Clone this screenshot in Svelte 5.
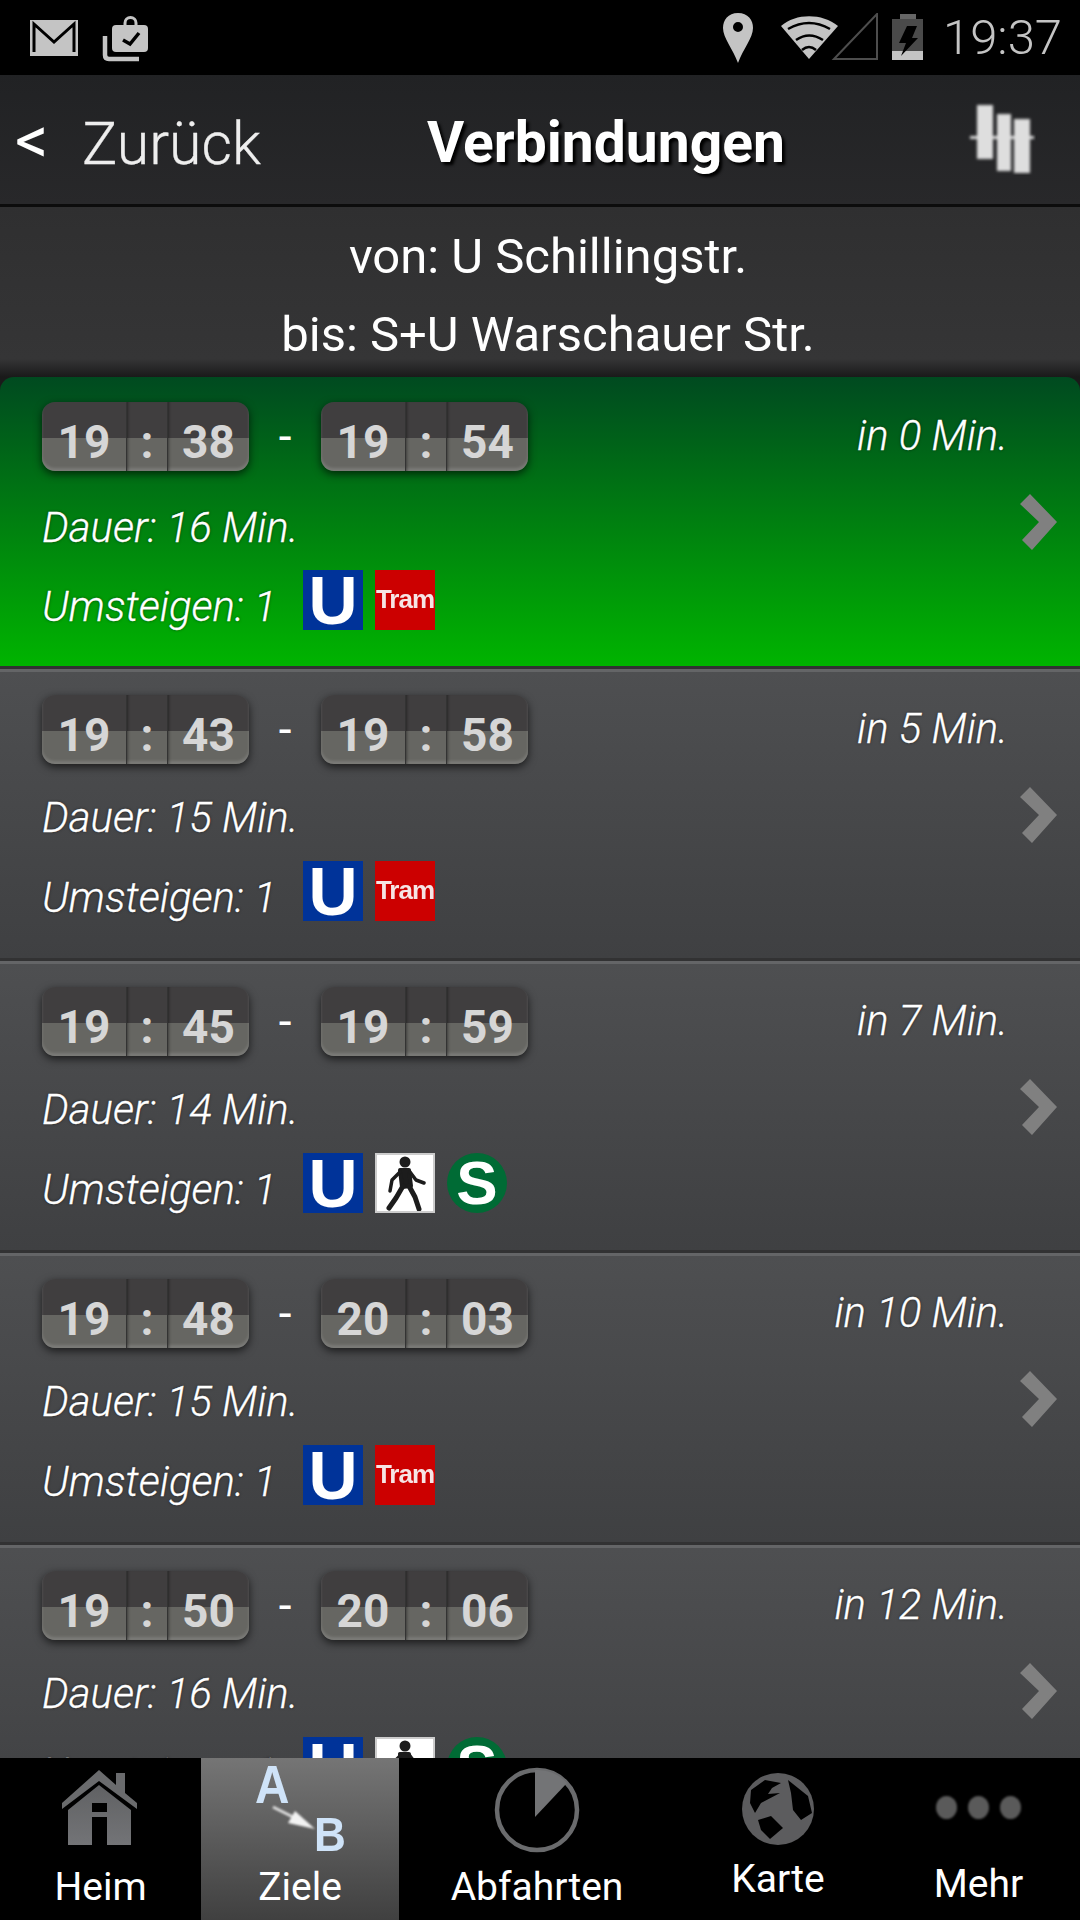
<script>
	let rows = [
		{ from: ['19', '38'], to: ['19', '54'], wait: 0, duration: 16, lines: ['u', 'tram'], active: true },
		{ from: ['19', '43'], to: ['19', '58'], wait: 5, duration: 15, lines: ['u', 'tram'] },
		{ from: ['19', '45'], to: ['19', '59'], wait: 7, duration: 14, lines: ['u', 'walk', 's'] },
		{ from: ['19', '48'], to: ['20', '03'], wait: 10, duration: 15, lines: ['u', 'tram'] },
		{ from: ['19', '50'], to: ['20', '06'], wait: 12, duration: 16, lines: ['u', 'walk', 's'] }
	];
</script>

{#snippet clock(time)}
	<div class="clock">
		<span class="cell hour">{time[0]}</span>
		<span class="cell colon">:</span>
		<span class="cell minute">{time[1]}</span>
	</div>
{/snippet}

<div class="screen">
	<div class="status">
		<svg width="125" height="50" viewBox="0 0 125 50">
			<rect x="0" y="7" width="48" height="36" fill="#c4c4c4" />
			<path d="M4 39 V11 L24 29 L44 11 V39" fill="none" stroke="#000" stroke-width="3" />
			<rect x="82" y="12" width="36" height="27" rx="4" fill="#c4c4c4" />
			<path d="M95 13 v-3 a5 5 0 0 1 11 0 v3" fill="none" stroke="#c4c4c4" stroke-width="3" />
			<path d="M93 27 l7 4 l9 -11" fill="none" stroke="#000" stroke-width="3.5" />
			<path d="M75 23 v19 q0 4 4 4 h30" fill="none" stroke="#c4c4c4" stroke-width="4.5" />
		</svg>
		<div class="st-right">
			<svg width="206" height="50" viewBox="0 0 206 50">
				<path fill-rule="evenodd" d="M18 0 C8 0 3 7 3 15 C3 25 13 36 18 50 C23 36 33 25 33 15 C33 7 28 0 18 0 Z M18 9 a5 5 0 1 1 0 10 a5 5 0 1 1 0 -10 Z" fill="#c4c4c4" />
				<path d="M61 13 C76 0 102 0 118 13 L89 46 Z" fill="#c4c4c4" />
				<path d="M68 16 Q89 4 110 16 M76 27 Q89 18 103 27 M82 37 Q89 31 96 37" fill="none" stroke="#000" stroke-width="2.5" />
				<path d="M114 46 L157 1 V46 Z" fill="none" stroke="#4d4d4d" stroke-width="2" />
				<rect x="180" y="1" width="16" height="6" fill="#666" />
				<rect x="172" y="6" width="31" height="32" fill="#4a4a4a" />
				<rect x="172" y="38" width="31" height="9" fill="#c4c4c4" />
				<path d="M187 13 L197 13 L192 25 L198 25 L181 43 L186 30 L179 30 Z" fill="#000" />
			</svg>
			<span class="time">19:37</span>
		</div>
	</div>

	<header class="topbar">
		<span class="back-arrow">&lt;</span>
		<span class="back">Zurück</span>
		<span class="title">Verbindungen</span>
		<svg class="filter" width="70" height="76" viewBox="0 0 70 76">
			<defs>
				<filter id="soft"><feGaussianBlur stdDeviation="1.5" /></filter>
				<filter id="softer"><feGaussianBlur stdDeviation="0.7" /></filter>
			</defs>
			<g filter="url(#soft)" fill="#dedede">
				<rect x="11" y="6" width="16" height="54" />
				<rect x="31" y="15" width="14" height="57" />
				<rect x="48" y="20" width="16" height="54" />
				<rect x="4" y="37" width="64" height="3" />
			</g>
		</svg>
	</header>

	<div class="route">
		<div>von: U Schillingstr.</div>
		<div>bis: S+U Warschauer Str.</div>
	</div>

	<div class="list">
		{#each rows as row}
			<div class="row" class:active={row.active}>
				<div class="left">
					<div class="times">
						{@render clock(row.from)}
						<span class="dash">-</span>
						{@render clock(row.to)}
					</div>
					<div class="info">Dauer: {row.duration} Min.</div>
					<div class="changes">
						<span class="info label">Umsteigen: 1</span>
						{#each row.lines as line}
							{#if line == 'u'}
								<span class="line u">U</span>
							{:else if line == 'tram'}
								<span class="line tram">Tram</span>
							{:else if line == 'walk'}
								<span class="line walk">
									<svg width="44" height="56" viewBox="0 0 44 56">
										<g fill="#1c1c1c" stroke="#1c1c1c" stroke-linecap="round" stroke-linejoin="round">
											<circle cx="22" cy="7" r="5.5" stroke="none" />
											<path d="M17 15 L26 15 L28 31 L19 32 Z" stroke-width="4" />
											<path d="M17 17 L9 25 L7 36" fill="none" stroke-width="3.5" />
											<path d="M27 17 L33 25 L41 28" fill="none" stroke-width="3.5" />
											<path d="M20 31 L13 43 L6 53" fill="none" stroke-width="5" />
											<path d="M26 31 L32 42 L36 54" fill="none" stroke-width="5" />
										</g>
									</svg>
								</span>
							{:else}
								<span class="line s">S</span>
							{/if}
						{/each}
					</div>
				</div>
				<div class="right">
					<div class="info wait">in {row.wait} Min.</div>
					<svg class="chevron" width="38" height="56" viewBox="0 0 38 56">
						<path d="M0 10 L10 0 L37 28 L12 56 L2 46 L19 28 Z" fill="#808080" />
					</svg>
				</div>
			</div>
		{/each}
	</div>

	<nav class="tabs">
		<div class="tab" style="width: 201px">
			<svg class="house" width="78" height="78" viewBox="0 0 78 78">
				<defs><linearGradient id="house" x1="0" y1="0" x2="0" y2="1"><stop offset="0" stop-color="#606163" /><stop offset="1" stop-color="#737477" /></linearGradient></defs>
				<path d="M37 1 L54 16 V4 H63 V24 L75 34 V40 L37 12 L0 40 V34 Z" fill="#6a6b6d" />
				<path fill-rule="evenodd" d="M37 16 L69 41 V76 H45 V48 H30 V76 H6 V41 Z M30 34 H45 V43 H30 Z" fill="url(#house)" />
			</svg>
			<span>Heim</span>
		</div>
		<div class="tab selected" style="width: 198px">
			<div class="ab">
				<span class="a">A</span>
				<svg class="arrow" width="50" height="30" viewBox="0 0 50 30">
					<path d="M3 3 L25 14" stroke="#ddd" stroke-width="3" />
					<path d="M45 25 L25 7 L18 19 Z" fill="#f2f2f2" />
				</svg>
				<span class="b">B</span>
			</div>
			<span>Ziele</span>
		</div>
		<div class="tab" style="width: 276px">
			<svg width="86" height="86" viewBox="0 0 86 86">
				<circle cx="43" cy="43" r="40" fill="none" stroke="#6a6b6d" stroke-width="4.5" />
				<path d="M41 50 L41 3 A40 40 0 0 1 73 16 Z" fill="#737476" />
			</svg>
			<span>Abfahrten</span>
		</div>
		<div class="tab karte" style="width: 206px">
			<svg width="72" height="72" viewBox="0 0 72 72">
				<circle cx="36" cy="36" r="36" fill="#5c5c5e" />
				<g fill="#000" filter="url(#softer)">
					<path d="M8 30 L9 17 L23 7 L39 10 L30 15 L26 21 L38 20 L19 30 L13 40 Z" />
					<path d="M46 7 L66 23 L70 40 L59 47 L51 37 L49 20 Z" />
					<path d="M16 47 L29 43 L41 55 L28 66 L19 57 Z" />
				</g>
			</svg>
			<span>Karte</span>
		</div>
		<div class="tab mehr" style="width: 195px">
			<div class="dots"><i></i><i></i><i></i></div>
			<span>Mehr</span>
		</div>
	</nav>
</div>

<style>
	:global(body) {
		margin: 0;
		background: #000;
	}

	.screen {
		width: 1080px;
		height: 1920px;
		display: flex;
		flex-direction: column;
		font-family: Roboto, 'Liberation Sans', sans-serif;
		color: #fff;
		overflow: hidden;
	}

	.status {
		height: 75px;
		flex: none;
		background: #000;
		display: flex;
		justify-content: space-between;
		align-items: center;
		padding: 0 18px 0 30px;
		box-sizing: border-box;
	}

	.st-right {
		display: flex;
		align-items: center;
		gap: 17px;
	}

	.time {
		font-size: 49px;
		font-weight: 300;
		color: #c4c4c4;
		line-height: 50px;
	}

	.topbar {
		height: 132px;
		flex: none;
		box-sizing: border-box;
		display: flex;
		align-items: center;
		background: linear-gradient(#212224, #28282a);
		border-bottom: 3px solid #0c0c0c;
		padding-left: 15px;
	}

	.back-arrow {
		font-size: 66px;
		font-weight: 400;
		width: 67px;
		margin-top: 2px;
	}

	.back {
		font-size: 59px;
		font-weight: 300;
		width: 345px;
		color: #eee;
		margin-top: 7px;
		-webkit-text-stroke: 0.3px #eee;
	}

	.title {
		font-size: 57px;
		font-weight: 700;
		width: 539px;
		text-shadow: 3px 3px 3px #000;
		margin-top: 6px;
	}

	.filter {
		margin-top: -6px;
	}

	.route {
		height: 170px;
		flex: none;
		box-sizing: border-box;
		background: linear-gradient(#2f2f30, #353536 calc(100% - 18px), #1a1a1a);
		text-align: center;
		font-size: 49px;
		line-height: 78px;
		padding: 11px 0 0 16px;
	}

	.list {
		flex: 1;
		min-height: 0;
		overflow: hidden;
		background: #1a1a1a;
	}

	.row {
		height: 292px;
		box-sizing: border-box;
		display: flex;
		justify-content: space-between;
		padding: 23px 22px 0 42px;
		background: linear-gradient(#4e4f51, #3f4042);
		border-top: 3px solid #646567;
		border-bottom: 3px solid #323233;
	}

	.row.active {
		background: linear-gradient(#004a20, #00b400);
		border-top: 0;
		padding-top: 25px;
		border-radius: 14px 14px 0 0;
	}

	.times {
		display: flex;
		align-items: center;
	}

	.clock {
		width: 207px;
		height: 69px;
		display: flex;
		border-radius: 13px;
		background: linear-gradient(#403e3f 52%, #666662 52%);
		box-shadow:
			0 3px 8px rgba(0, 0, 0, 0.65),
			inset 0 -3px 3px rgba(255, 255, 255, 0.14);
		color: #d6d6d6;
		font-size: 46px;
		font-weight: 700;
		line-height: 81px;
		overflow: hidden;
	}

	.cell {
		text-align: center;
		box-sizing: border-box;
	}

	.hour {
		width: 84px;
	}

	.colon {
		width: 42px;
		border-left: 1px solid #333;
		border-right: 1px solid #333;
		box-shadow: inset 3px 0 3px -2px rgba(0, 0, 0, 0.4);
	}

	.minute {
		width: 81px;
		box-shadow: inset 3px 0 3px -2px rgba(0, 0, 0, 0.4);
	}

	.dash {
		width: 72px;
		text-align: center;
		font-size: 46px;
		margin-top: -2px;
	}

	.info {
		font-size: 42px;
		font-weight: 300;
		font-style: italic;
		line-height: 60px;
		text-shadow: 0 0 3px rgba(0, 0, 0, 0.6);
		-webkit-text-stroke: 0.3px #fff;
		white-space: nowrap;
	}

	.left > .info {
		margin-top: 24px;
	}

	.active .left > .info {
		margin-top: 27px;
	}

	.changes {
		display: flex;
		align-items: flex-start;
		height: 60px;
		margin-top: 13px;
	}

	.active .changes {
		margin-top: 12px;
	}

	.label {
		width: 261px;
		margin-top: 7px;
	}

	.line {
		width: 60px;
		height: 60px;
		margin-right: 12px;
		display: flex;
		align-items: center;
		justify-content: center;
		font-family: 'Liberation Sans', sans-serif;
		font-weight: 700;
		line-height: 1;
	}

	.u {
		background: #003399;
		font-size: 68px;
		filter: blur(0.6px);
	}

	.tram {
		background: #cc0000;
		font-size: 26px;
		color: #f6e4e4;
		padding-bottom: 3px;
		box-sizing: border-box;
		letter-spacing: -1px;
		filter: blur(0.5px);
	}

	.walk {
		background: #fff;
		box-shadow: inset 0 0 0 2px #ccc;
	}

	.walk svg {
		filter: blur(0.5px);
	}

	.s {
		background: #006b35;
		border-radius: 50%;
		font-size: 62px;
		filter: blur(0.5px);
	}

	.right {
		display: flex;
		flex-direction: column;
		align-items: flex-end;
	}

	.wait {
		margin: 4px 50px 0 0;
	}

	.chevron {
		margin-top: 28px;
	}

	.tabs {
		height: 162px;
		flex: none;
		display: flex;
		background: #000;
		position: relative;
	}

	.tab {
		box-sizing: border-box;
		height: 100%;
		display: flex;
		flex-direction: column;
		align-items: center;
		padding-top: 9px;
		font-size: 39px;
		line-height: 44px;
		position: relative;
	}

	.tab > span {
		position: absolute;
		top: 107px;
	}

	.house {
		margin-top: 2px;
	}

	.tab.karte svg {
		margin-top: 6px;
	}

	.tab.karte > span {
		top: 99px;
	}

	.tab.mehr > span {
		top: 104px;
	}

	.selected {
		background: linear-gradient(#757575, #404040);
	}

	.ab {
		position: relative;
		width: 100%;
		height: 96px;
		font-family: 'Liberation Sans', sans-serif;
		font-weight: 700;
		color: #cfe3f8;
	}

	.ab span {
		position: absolute;
		filter: blur(0.7px);
		transform-origin: left;
		line-height: 1;
	}

	.ab .a {
		top: -9px;
		left: 54px;
		font-size: 53px;
		transform: scaleX(0.9);
	}

	.ab .b {
		top: 43px;
		left: 113px;
		font-size: 49px;
		transform: scaleX(0.9);
	}

	.arrow {
		position: absolute;
		left: 69px;
		top: 37px;
		filter: blur(0.8px);
	}

	.dots {
		display: flex;
		gap: 11px;
		margin-top: 29px;
	}

	.dots i {
		width: 21px;
		height: 23px;
		border-radius: 50%;
		background: #5a5a5a;
		filter: blur(1.2px);
	}
</style>
